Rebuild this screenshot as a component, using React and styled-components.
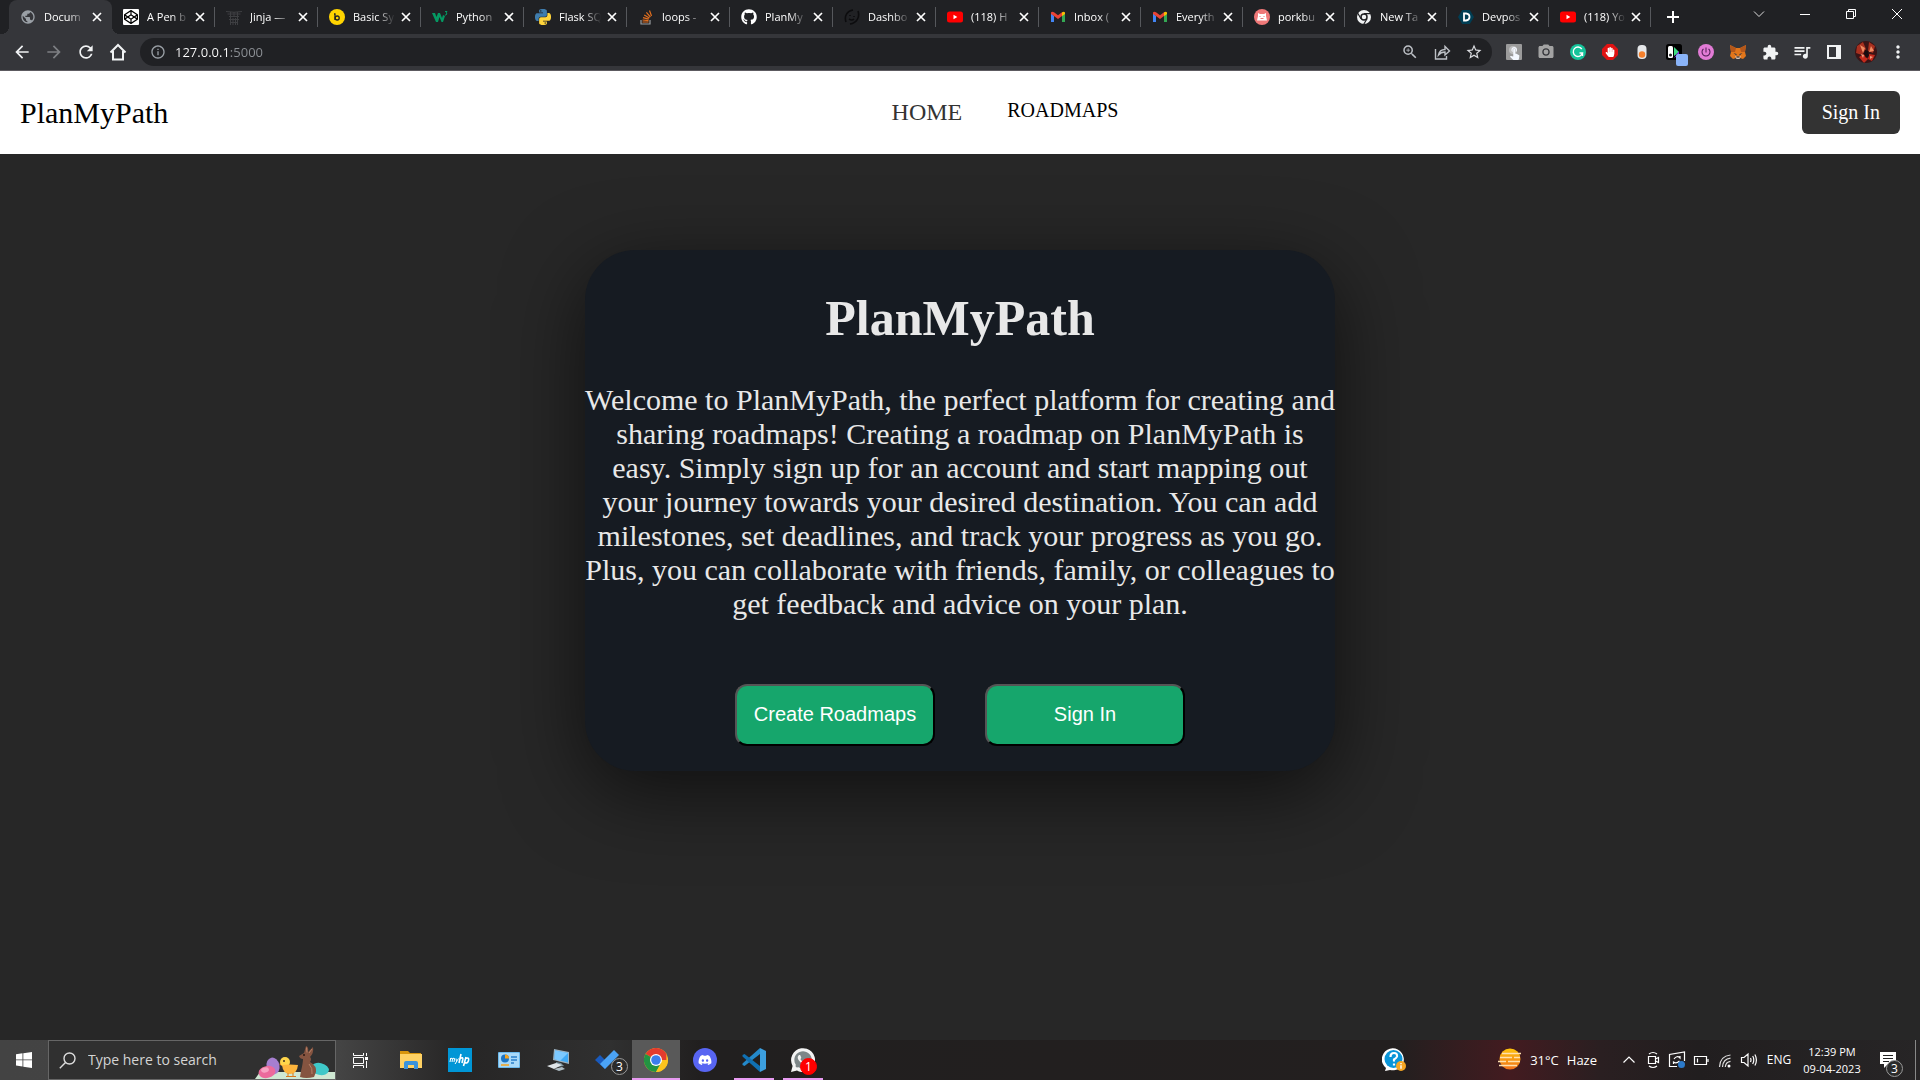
import React from "react";
import styled, { createGlobalStyle, css } from "styled-components";
import {
  MdArrowBack,
  MdArrowForward,
  MdExtension,
  MdInfoOutline,
  MdMoreVert,
  MdPhotoCamera,
  MdPowerSettingsNew,
  MdPublic,
  MdQueueMusic,
  MdRefresh,
  MdStarBorder,
  MdTouchApp,
  MdZoomIn,
} from "react-icons/md";
import { FaCodepen, FaDiscord, FaGithub, FaHandPaper, FaWhatsapp } from "react-icons/fa";

const GlobalStyle = createGlobalStyle`
  * {
    box-sizing: border-box;
  }

  body {
    margin: 0;
    background: #272727;
  }

  svg {
    display: block;
    flex: none;
  }

  button,
  input {
    margin: 0;
    padding: 0;
    border: 0;
    background: none;
    color: inherit;
    font: inherit;
  }
`;

const Screen = styled.div`
  display: flex;
  flex-direction: column;
  min-height: 100vh;
  background: #272727;
`;

/* browser */

const TabStrip = styled.header`
  display: flex;
  height: 34px;
  padding-left: 9px;
  background: #202124;
  color: #fff;
  font: 11px/16px "Open Sans", sans-serif;
`;

const Tabs = styled.div`
  display: grid;
  grid-template-columns: repeat(10, minmax(0, 103px)) repeat(6, minmax(0, 102px));
`;

const TabBox = styled.div`
  position: relative;
  display: flex;
  align-items: center;
  min-width: 0;
  padding: 0 7px 0 11px;

  &::after {
    content: "";
    position: absolute;
    right: 0;
    top: 7px;
    width: 1px;
    height: 20px;
    background: #56585c;
  }

  ${(props) =>
    props.$active &&
    css`
      background: #35363a;
      border-radius: 8px 8px 0 0;

      &::before,
      &::after {
        content: "";
        position: absolute;
        top: auto;
        bottom: 0;
        width: 8px;
        height: 8px;
        background: radial-gradient(circle at 0 0, transparent 8px, #35363a 8px);
      }
      &::before {
        left: -8px;
      }
      &::after {
        right: -8px;
        background: radial-gradient(circle at 100% 0, transparent 8px, #35363a 8px);
      }
    `}
`;

const TabTitle = styled.span`
  flex: 1;
  min-width: 0;
  margin-left: 8px;
  white-space: nowrap;
  mask-image: linear-gradient(to right, #000 24px, transparent 42px);
`;

const IconButton = styled.button`
  display: flex;
  align-items: center;
  justify-content: center;
  flex: none;
  width: ${(props) => props.$width || 32}px;
  height: ${(props) => props.$height || 36}px;
  color: ${(props) => props.$color || "#f1f3f4"};
`;

const WindowButtons = styled.div`
  display: flex;
  margin-left: auto;
`;

const Toolbar = styled.div`
  display: flex;
  align-items: center;
  height: 37px;
  padding: 0 6px;
  border-bottom: 1px solid #5c5a60;
  background: #35363a;
`;

const Omnibox = styled.div`
  display: flex;
  align-items: center;
  flex: 1;
  height: 28px;
  margin: 0 6px;
  padding: 0 2px 0 10px;
  border-radius: 14px;
  background: #202124;
  color: #9aa0a6;
`;

const UrlInput = styled.input`
  flex: 1;
  min-width: 0;
  margin-left: 9px;
  background: linear-gradient(to right, #fff 54px, #8d9196 54px);
  background-clip: text;
  color: transparent;
  font: 13px/20px "Open Sans", sans-serif;
`;

/* site */

const NavBar = styled.nav`
  display: flex;
  align-items: center;
  justify-content: space-between;
  padding: 20px;
  background: #fff;
  font-family: "Liberation Serif", serif;
`;

const Brand = styled.a`
  color: #000;
  font-size: 30px;
  line-height: 34px;
  text-decoration: none;
`;

const NavLinks = styled.ul`
  display: flex;
  align-items: flex-start;
  gap: 45px;
  margin: 0;
  padding: 0 0 0 40px;
  list-style: none;
`;

const NavLink = styled.a`
  display: block;
  color: ${(props) => (props.$current ? "#333" : "#000")};
  font-size: ${(props) => (props.$current ? 24 : 20)}px;
  line-height: ${(props) => (props.$current ? 27 : 23)}px;
  text-decoration: none;
`;

const NavButton = styled.button`
  padding: 10px 20px;
  border-radius: 6px;
  background: #333;
  color: #fff;
  font-size: 20px;
  line-height: 23px;
`;

const Main = styled.main`
  flex: 1;
  padding: 96px 20px;
  font-family: "Liberation Serif", serif;
`;

const Card = styled.section`
  max-width: 750px;
  margin: 0 auto;
  padding: 39px 0 25px;
  border-radius: 50px;
  background: #161b22;
  box-shadow: 0 20px 80px rgba(0, 0, 0, 0.6);
  color: #e8e8e8;
  text-align: center;
`;

const Title = styled.h1`
  margin: 0 0 36px;
  font-size: 50px;
  line-height: 58px;
`;

const Intro = styled.p`
  margin: 0 0 63px;
  font-size: 30px;
  line-height: 34px;
`;

const Actions = styled.div`
  display: flex;
  justify-content: center;
  gap: 50px;
`;

const ActionButton = styled.button`
  width: 200px;
  height: 62px;
  padding-bottom: 2px;
  border: 2px solid;
  border-color: #555 #000 #000 #555;
  border-radius: 12px;
  background: #16a66c;
  color: #fff;
  font: 20px/24px "Liberation Sans", sans-serif;
`;

/* taskbar */

const TaskBar = styled.footer`
  display: flex;
  align-items: center;
  height: 40px;
  background: linear-gradient(
    to right,
    #434343 0,
    #444 340px,
    #262525 460px,
    #303030 610px,
    #211f1f 700px,
    #231f1f 1400px,
    #431b20 1510px,
    #2a1f21 1600px,
    #211e1f 1700px,
    #272526 1920px
  );
  color: #fff;
  font-family: "Open Sans", sans-serif;
`;

const SearchBox = styled.label`
  display: flex;
  align-items: center;
  width: 288px;
  height: 40px;
  padding-left: 10px;
  border: 1px solid #666;
  background: #303030;
`;

const SearchInput = styled.input`
  flex: 1;
  min-width: 0;
  margin-left: 12px;
  font-size: 14px;
  line-height: 20px;

  &::placeholder {
    color: #d4d4d4;
    opacity: 1;
  }
`;

const Apps = styled.div`
  display: flex;
  gap: 1px;
  margin-left: 3px;
`;

const AppButton = styled.button`
  position: relative;
  display: flex;
  align-items: center;
  justify-content: center;
  width: 48px;
  height: 40px;
  background: ${(props) => (props.$active ? "#595959" : "none")};

  &::after {
    content: "";
    position: absolute;
    bottom: 0;
    left: ${(props) => (props.$active ? 0 : 4)}px;
    right: ${(props) => (props.$active ? 0 : 4)}px;
    height: 2px;
    background: ${(props) => (props.$open ? "#e89bf2" : "none")};
  }
`;

const Badge = styled.span`
  position: absolute;
  right: ${(props) => props.$right}px;
  bottom: ${(props) => props.$bottom}px;
  width: 17px;
  height: 17px;
  border: 1px solid ${(props) => (props.$alert ? "#f00" : "#999")};
  border-radius: 50%;
  background: ${(props) => (props.$alert ? "#f00" : "#2b2b2b")};
  color: #fff;
  font-size: 12px;
  line-height: 15px;
  text-align: center;
`;

const Tray = styled.div`
  display: flex;
  align-items: center;
  height: 40px;
  margin-left: auto;
  font-size: 13px;
  line-height: 18px;
`;

const Weather = styled.button`
  display: flex;
  align-items: center;
  gap: 8px;
  margin: 0 20px 0 88px;
`;

const Language = styled.button`
  width: 36px;
  font-size: 12px;
`;

const Clock = styled.time`
  width: 70px;
  font-size: 11px;
  line-height: 17px;
  text-align: center;
`;

const Notifications = styled.button`
  position: relative;
  display: flex;
  align-items: center;
  justify-content: center;
  width: 48px;
  height: 40px;
  padding-right: 6px;
`;

const ShowDesktop = styled.button`
  width: 5px;
  height: 40px;
  border-left: 1px solid #888;
`;

/* drawings */

const PYTHON_HALF =
  "M14.25.18l.9.2.73.26.59.3.45.32.34.34.25.34.16.33.1.3.04.26.02.2-.01.13V8.5l-.05.63-.13.55-.21.46-.26.38-.3.31-.33.25-.35.19-.35.14-.33.1-.3.07-.26.04-.21.02H8.77l-.69.05-.59.14-.5.22-.41.27-.33.32-.27.35-.2.36-.15.37-.1.35-.07.32-.04.27-.02.21v3.06H3.17l-.21-.03-.28-.07-.32-.12-.35-.18-.36-.26-.36-.36-.35-.46-.32-.59-.28-.73-.21-.88-.14-1.05-.05-1.23.06-1.22.16-1.04.24-.87.32-.71.36-.57.4-.44.42-.33.42-.24.4-.16.36-.1.32-.05.24-.01h.16l.06.01h8.16v-.83H6.18l-.01-2.75-.02-.37.05-.34.11-.31.17-.28.25-.26.31-.23.38-.2.44-.18.51-.15.58-.12.64-.1.71-.06.77-.04.84-.02 1.27.05zm-6.3 1.98l-.23.33-.08.41.08.41.23.34.33.22.41.09.41-.09.33-.22.23-.34.08-.41-.08-.41-.23-.33-.33-.22-.41-.09-.41.09z";

const Svg = ({ size = 16, h = size, vb, children, ...rest }) => (
  <svg width={size} height={h} viewBox={vb || `0 0 ${size} ${h}`} fill="none" {...rest}>
    {children}
  </svg>
);

const CloseIcon = () => (
  <Svg size={16} stroke="#fff" strokeWidth="1.7">
    <path d="M4 4l8 8M12 4l-8 8" />
  </Svg>
);

const CodepenIcon = () => (
  <Svg>
    <rect width="16" height="16" rx="1" fill="#fff" />
    <FaCodepen x="1" y="1" size={14} color="#000" />
  </Svg>
);

const JinjaIcon = () => (
  <Svg stroke="#3e3f42">
    <path d="M0 2.500q8 1.500 16 0M1.500 5h13M3 7.500h10M4.500 3v13M11.500 3v13M8 3v4M7 9v7M9.500 9v7M3 10.500h10M4.500 13.500h7" />
  </Svg>
);

const BasicIcon = () => (
  <Svg>
    <circle cx="8" cy="8" r="8" fill="#ffd400" />
    <path d="M6 4.500v6.500M5 5h1.500" stroke="#222" strokeWidth="1.300" />
    <circle cx="8.200" cy="9" r="2" stroke="#222" strokeWidth="1.300" />
  </Svg>
);

const W3Icon = () => (
  <Svg>
    <path d="M0 4h3l1.500 4L6 4h2l2 5 1-3 2 1-2 6h-1.500L7.500 8 6 13H4z" fill="#059862" />
    <path d="M13 2.500h2l-1 1.500q2 .5 0 2h-1" stroke="#059862" />
  </Svg>
);

const PythonIcon = () => (
  <Svg vb="0 0 24 24">
    <path d={PYTHON_HALF} fill="#3f7cac" />
    <path d={PYTHON_HALF} fill="#ffd43b" transform="rotate(180 12 12)" />
  </Svg>
);

const StackIcon = () => (
  <Svg>
    <path d="M3 11v4h9v-4" stroke="#9a9da0" strokeWidth="1.200" />
    <path
      d="M4.500 13h6M4.500 11l6 .6M5 8.600l5.800 1.600M6.200 6l5.200 3M8.400 3.400l4 4.600M11.500 1.500l2 5.500"
      stroke="#e36f1e"
      strokeWidth="1.200"
    />
  </Svg>
);

const DashIcon = () => (
  <Svg stroke="#0c0c0e" strokeWidth="1.600">
    <path d="M2 13C0 7 3 2 9 1M14 2c2 6-1 12-8 13" />
    <path d="M6 6v1M10 7v1M5 10q3 2 5 0" />
  </Svg>
);

const YouTubeIcon = () => (
  <Svg>
    <rect y="2.500" width="16" height="11" rx="2.500" fill="#f00" />
    <path d="M6.500 5.800v4.400L10.300 8z" fill="#fff" />
  </Svg>
);

const GmailIcon = () => (
  <Svg>
    <path d="M1 4v9h3V7z" fill="#4285f4" />
    <path d="M15 4v9h-3V7z" fill="#34a853" />
    <path d="M1 3.500Q2 2 4 3.300l4 3 4-3V7L8 10 4 7 1 5z" fill="#ea4335" />
    <path d="M12 3.300q2-1.300 3 .2V5l-3 2.200z" fill="#fbbc04" />
  </Svg>
);

const PorkbunIcon = () => (
  <Svg>
    <circle cx="8" cy="8" r="8" fill="#ef7878" />
    <path d="M4 4l2 1h4l2-1v3l1 4.500H3L4 7z" fill="#fff" />
    <path d="M5.500 7.500h1M9.500 7.500h1M6.500 9.500h3" stroke="#ef7878" />
  </Svg>
);

const ChromeGreyIcon = () => (
  <Svg>
    <circle cx="8" cy="8" r="7" fill="#f1f3f4" />
    <circle cx="8" cy="8" r="3" fill="#f1f3f4" stroke="#202124" strokeWidth="1.500" />
    <path d="M8 4.600h7M5 9.800L1.600 4M11 9.800L7.600 15.500" stroke="#202124" strokeWidth="1.200" />
  </Svg>
);

const DevpostIcon = () => (
  <Svg>
    <path d="M4.200 1h7.600L16 8l-4.200 7H4.200L0 8z" fill="#003e54" />
    <path d="M6 4.500h2q3.500.3 3.500 3.500T8 11.500H6z" stroke="#fff" strokeWidth="1.800" />
  </Svg>
);

const ShareIcon = () => (
  <Svg size={18} stroke="#bdc1c6" strokeWidth="1.400">
    <path d="M2.500 6v10h11v-3" />
    <path d="M5.500 12q1-5.500 6.500-5.500V3.500L16.500 8 12 12V9q-4 0-6.500 3z" />
  </Svg>
);

const HomeIcon = () => (
  <Svg size={18} stroke="#f1f3f4" strokeWidth="2">
    <path d="M1.500 9.500L9 2l7.500 7.500M4 8v8.500h10V8" />
  </Svg>
);

const TouchIcon = () => (
  <Svg>
    <rect width="16" height="16" rx="1" fill="#9b9b9b" />
    <circle cx="7" cy="6" r="4" fill="#bdbdbd" />
    <MdTouchApp x="1" y="1" size={15} color="#f4f8ff" />
  </Svg>
);

const GrammarlyIcon = () => (
  <Svg>
    <circle cx="8" cy="8" r="8" fill="#15c39a" />
    <path d="M11.800 5A4.700 4.700 0 1 0 12.500 9H9.500M12.500 9v3" stroke="#fff" strokeWidth="1.400" />
  </Svg>
);

const AdblockIcon = () => (
  <Svg>
    <path d="M5 0h6l5 5v6l-5 5H5l-5-5V5z" fill="#e01212" />
    <FaHandPaper x="3" y="3" size={10} color="#fff" />
  </Svg>
);

const PillIcon = () => (
  <Svg>
    <rect x="3.500" y="1" width="9" height="14" rx="4" fill="#e6e8ea" />
    <circle cx="8" cy="10.500" r="3.200" fill="#f5802c" />
  </Svg>
);

const PlayerIcon = () => (
  <Svg size={28}>
    <rect x="6" y="6" width="16" height="16" rx="2.500" fill="#000" />
    <rect x="8" y="8" width="5" height="12" rx="1.500" fill="#fff" />
    <circle cx="10.500" cy="17" r="1.500" fill="#222" />
    <path d="M14 9l5 5-5 4z" fill="#3ddc84" />
    <path d="M14 20l5-7v4z" fill="#8a2be2" />
    <rect x="16" y="16" width="12" height="12" rx="2" fill="#8ab4f8" />
  </Svg>
);

const PowerIcon = () => (
  <Svg>
    <circle cx="8" cy="8" r="8" fill="#e27bd6" />
    <MdPowerSettingsNew x="2" y="2" size={12} color="#4b1c52" />
  </Svg>
);

const FoxIcon = () => (
  <Svg>
    <path d="M0 1l6 3h4l6-3-1 7 1 4-3 3-3-1H6l-3 1-3-3 1-4z" fill="#e2761b" />
    <path d="M0 1l6 3-1 4H1zM16 1l-6 3 1 4h4z" fill="#b5571a" />
    <path d="M3.500 9l3 1v1.500zM12.500 9l-3 1v1.500z" fill="#233447" />
    <path d="M5 12l2 .5h2l2-.5-1.500 3h-3z" fill="#d7c1b3" />
    <path d="M6.500 12.500h3v1h-3z" fill="#161616" />
  </Svg>
);

const PanelIcon = () => (
  <Svg>
    <rect x="1" y="1" width="14" height="14" fill="#f1f3f4" />
    <rect x="3" y="3" width="7" height="10" fill="#35363a" />
  </Svg>
);

const AvatarIcon = () => (
  <Svg size={22}>
    <clipPath id="avatar">
      <circle cx="11" cy="11" r="11" />
    </clipPath>
    <g clipPath="url(#avatar)">
      <path d="M0 0h22v22H0z" fill="#3a1416" />
      <path d="M2 5l6-4 3 7-4 6-6-2zM14 1l6 4-2 7-5-2z" fill="#a8301f" />
      <path d="M5 4l5 3-2 5zM16 5l3 5-5 1z" fill="#ef8b62" />
      <path d="M4 16l5-3 4 5-4 4zM14 13l6 1-3 6-4-2z" fill="#c32a1c" />
      <path d="M10 9l3 1 1 5-3 2-2-4z" fill="#180b0e" />
      <path d="M6 13l3 1-1 3zM15 15l3 1-3 2z" fill="#f2a080" />
    </g>
  </Svg>
);

const EasterArt = () => (
  <Svg size={80} h={38}>
    <path d="M0 38l5-7h75v7z" fill="#cfe8d3" />
    <ellipse cx="18" cy="25" rx="6.500" ry="8.500" fill="#a67fd0" transform="rotate(-12 18 25)" />
    <ellipse cx="12" cy="31" rx="8.500" ry="6" fill="#ec6a9c" transform="rotate(-12 12 31)" />
    <ellipse cx="10" cy="29" rx="4" ry="2.500" fill="#f7a3c3" transform="rotate(-12 10 29)" />
    <ellipse cx="65" cy="28" rx="9" ry="6" fill="#3fc8c8" transform="rotate(12 65 28)" />
    <path d="M26 22l-2 1 2 1.500z" fill="#e8731a" />
    <circle cx="30" cy="21" r="5" fill="#ffd54a" />
    <path d="M27 24q8-1 16 0-1 9-8 9t-8-9z" fill="#fdb43c" />
    <path d="M33 32v3M38 32v3M31 35.500h10" stroke="#d9781a" />
    <circle cx="29" cy="20" r="1" fill="#432" />
    <g transform="translate(0 5)">
      <path
        d="M44 10l5-3 2-7q3 1 2 6l5-5q1 6-3 10 2 2 0 5 7 4 6 10l-2 5q-8 2-14 0l1-6q2-8 2-12-3 0-4-3z"
        fill="#855440"
      />
      <path d="M51.500 1.500l.5 5M57 3l-3 4M54 18q4 4 3 10" stroke="#b98268" />
      <circle cx="49" cy="9" r="1" fill="#2a1712" />
    </g>
  </Svg>
);

const ExplorerIcon = () => (
  <Svg size={24}>
    <path d="M1 3h8l2 2h11v5H1z" fill="#d9960c" />
    <path d="M1 6h22v14H1z" fill="#ffd264" />
    <path d="M5 21v-6q0-2 2-2h10q2 0 2 2v6h-4v-4H9v4z" fill="#3a93dc" />
  </Svg>
);

const MyHpIcon = () => (
  <Svg size={24} stroke="#fff">
    <rect width="24" height="24" fill="#0096d6" stroke="none" />
    <path d="M2 14l.7-4M2.500 11q2-2 2 0L4 14M4.500 11q2-2 2 0L6 14M8 10.500l.5 3L10.500 10.500M9 13l-2 3" />
    <path d="M13 6l-2 9M12.300 10.500q3-2 2.500 1l-.8 3.500M18 9l-2.500 9M17.500 10.500q4-1.500 3 2t-3.800 2" strokeWidth="1.600" />
  </Svg>
);

const ControlPanelIcon = () => (
  <Svg size={22} h={16}>
    <rect width="22" height="16" rx="1" fill="#6bb9ec" />
    <rect x="1" y="1" width="20" height="14" fill="#a9d9f8" />
    <circle cx="7" cy="6.500" r="4" fill="#1b75c4" />
    <path d="M7 6.500V2.500a4 4 0 0 1 4 4z" fill="#f6a21c" />
    <path d="M13 5h6M13 8h6M13 11h3" stroke="#2a7fc9" strokeWidth="1.500" />
    <path d="M3 13h8" stroke="#f6a21c" strokeWidth="1.500" />
  </Svg>
);

const ComputerIcon = () => (
  <Svg size={24}>
    <path d="M8 1l15 3v12L7 12z" fill="#9db2c0" />
    <path d="M9 2.500L22 5v9.500L8.500 11z" fill="#3fa9f5" />
    <path d="M9 2.500L22 5l-8 8-5.500-2z" fill="#7cc9ff" />
    <path d="M10 14l5 1 3 3-8 1z" fill="#78909c" />
    <path d="M1 18l9-3 6 2-8 4z" fill="#dfe5e9" />
    <path d="M8 21l8-2 3 2-6 2z" fill="#b0bec5" />
  </Svg>
);

const TodoIcon = () => (
  <Svg size={24}>
    <path d="M0 12l5-5 7 7-2 7z" fill="#195abd" />
    <path d="M5 16L19 2l5 5-14 14z" fill="#4ba3f5" />
  </Svg>
);

const ChromeIcon = () => (
  <Svg size={24}>
    <circle cx="12" cy="12" r="12" fill="#fcc31e" />
    <path d="M12 12L1.600 6A12 12 0 0 1 22.400 6z" fill="#e33b2e" />
    <path d="M12 12H22.400V6H12z" fill="#e33b2e" />
    <path d="M1.600 6A12 12 0 0 0 12 24l5.200-9-5.200-3z" fill="#229342" />
    <path d="M17 12h7a12 12 0 0 1-12 12l5-9z" fill="#fcc31e" />
    <circle cx="12" cy="12" r="6" fill="#fff" />
    <circle cx="12" cy="12" r="4.800" fill="#3b7ded" />
  </Svg>
);

const DiscordIcon = () => (
  <Svg size={24}>
    <circle cx="12" cy="12" r="12" fill="#5865f2" />
    <FaDiscord x="5" y="5" size={14} color="#fff" />
  </Svg>
);

const CodeIcon = () => (
  <Svg size={24}>
    <path d="M18 0L.500 15.500v1.500L2.500 18 18 6z" fill="#2489ca" />
    <path d="M18 24L.500 8.500V7L2.500 6 18 18z" fill="#1070b3" />
    <path d="M18 0l6 3v18l-6 3z" fill="#3c9fe0" />
  </Svg>
);

const WhatsappIcon = () => (
  <Svg size={24}>
    <path d="M0 24l1.600-6A12 12 0 1 1 6 22.500z" fill="#f4f4f4" />
    <circle cx="12" cy="12" r="10" fill="#7d8688" />
    <FaWhatsapp x="0" y="0" size={24} color="#f4f4f4" />
  </Svg>
);

const StartIcon = () => (
  <Svg>
    <path d="M0 2.300L6.500 1.300v6.200H0zM7.300 1.200L16 0v7.500H7.300zM0 8.300h6.500v6.200L0 13.600zM7.300 8.300H16V16l-8.700-1.300z" fill="#fff" />
  </Svg>
);

const SearchIcon = () => (
  <Svg size={17} stroke="#ddd" strokeWidth="1.400">
    <circle cx="10.500" cy="6.500" r="5.500" />
    <path d="M6.500 10.500L.800 16.200" />
  </Svg>
);

const TaskViewIcon = () => (
  <Svg size={17} stroke="#fff" strokeWidth="1">
    <path d="M1.500 1v2.500h10V1M1.500 16v-2.500h10V16M1.500 5.500h10v6h-10zM14.500 1v3M14.500 9v7" />
    <path d="M13 5h3v3h-3z" fill="#fff" stroke="none" />
  </Svg>
);

const HelpIcon = () => (
  <Svg size={24}>
    <path d="M3 23l1-3A11 11 0 1 1 8 22z" fill="#fff" />
    <circle cx="11.500" cy="11" r="9" fill="#0a95d8" />
    <path d="M8.500 9q0-4 3.500-4t3 3.500q-.5 1.500-3 3v2M12 15.500v2" stroke="#fff" strokeWidth="2.200" />
    <circle cx="19" cy="18" r="5" fill="#f5a623" />
    <path d="M19 15v1.300M19 17.300v3.500" stroke="#fff" strokeWidth="1.400" />
  </Svg>
);

const HazeIcon = () => (
  <Svg size={24}>
    <linearGradient id="sun" x2="0" y2="1">
      <stop stopColor="#ffc40c" />
      <stop offset="1" stopColor="#f0701a" />
    </linearGradient>
    <circle cx="12" cy="11" r="10.500" fill="url(#sun)" />
    <path d="M4 5.500h19M2 9.500h12M16 9.500h6M0 13.500h8M10 13.500h12M1 17.500h18" stroke="#ffe0ae" strokeWidth="1.600" />
  </Svg>
);

const CaretIcon = () => (
  <Svg size={14} stroke="#fff" strokeWidth="1.200">
    <path d="M1.500 9.500L7 4l5.500 5.500" />
  </Svg>
);

const MeetIcon = () => (
  <Svg size={18} stroke="#fff" strokeWidth="1.200">
    <path d="M5 3q4-3 8 0M5 15q4 3 8 0M4.500 5.500h7v7h-7zM11.500 8l3-1.500v5l-3-1.500" />
  </Svg>
);

const SyncIcon = () => (
  <Svg size={18} stroke="#fff" strokeWidth="1.200">
    <path d="M9 15.500H1.500v-12L16.500 1v9" />
    <path d="M6 8q3-4 6-1V5M11.500 10q-3 3-6 1v2" />
    <circle cx="13.500" cy="13.500" r="3.500" fill="#2b79c9" stroke="none" />
  </Svg>
);

const BatteryIcon = () => (
  <Svg size={18} stroke="#fff" strokeWidth="1.200">
    <path d="M2.500 5.500h12v8h-12zM16 8v3M5.500 7.500v4" />
  </Svg>
);

const WifiIcon = () => (
  <Svg size={18} stroke="#ddd" strokeWidth="1.200">
    <path d="M3.500 16Q4 5 14.500 4M6.500 16Q7 8 14.500 7.200M9.300 16q.5-5 5.200-5.600" />
    <circle cx="13" cy="15" r="1.500" fill="#fff" stroke="none" />
  </Svg>
);

const VolumeIcon = () => (
  <Svg size={18} stroke="#fff" strokeWidth="1.200">
    <path d="M1.500 6.500h2.500l4-3.500v12l-4-3.500H1.500zM10.500 7q1 2 0 4M12.700 5q2.200 4 0 8M14.900 3.500q3 5.500 0 11" />
  </Svg>
);

const NoteIcon = () => (
  <Svg size={18}>
    <path d="M1 1h16v12H9l-4 4v-4H1z" fill="#fff" />
    <path d="M4 4.500h10M4 7.500h10M4 10.500h6" stroke="#222" />
  </Svg>
);

const tabs = [
  { title: "Docum", icon: <MdPublic size={16} color="#9aa0a6" /> },
  { title: "A Pen b", icon: <CodepenIcon /> },
  { title: "Jinja —", icon: <JinjaIcon /> },
  { title: "Basic Sy", icon: <BasicIcon /> },
  { title: "Python", icon: <W3Icon /> },
  { title: "Flask SQ", icon: <PythonIcon /> },
  { title: "loops -", icon: <StackIcon /> },
  { title: "PlanMy", icon: <FaGithub size={16} /> },
  { title: "Dashbo", icon: <DashIcon /> },
  { title: "(118) H", icon: <YouTubeIcon /> },
  { title: "Inbox (", icon: <GmailIcon /> },
  { title: "Everyth", icon: <GmailIcon /> },
  { title: "porkbu", icon: <PorkbunIcon /> },
  { title: "New Ta", icon: <ChromeGreyIcon /> },
  { title: "Devpos", icon: <DevpostIcon /> },
  { title: "(118) Yo", icon: <YouTubeIcon /> },
];

const extensions = [
  { name: "Touch", icon: <TouchIcon /> },
  { name: "Screenshot", icon: <MdPhotoCamera size={18} color="#a3a3a3" /> },
  { name: "Grammar", icon: <GrammarlyIcon /> },
  { name: "Ad blocker", icon: <AdblockIcon /> },
  { name: "Recorder", icon: <PillIcon /> },
  { name: "Player", icon: <PlayerIcon /> },
  { name: "Power", icon: <PowerIcon /> },
  { name: "Wallet", icon: <FoxIcon /> },
  { name: "Extensions", icon: <MdExtension size={17} /> },
  { name: "Media", icon: <MdQueueMusic size={20} /> },
  { name: "Side panel", icon: <PanelIcon /> },
  { name: "Profile", icon: <AvatarIcon /> },
  { name: "Menu", icon: <MdMoreVert size={20} /> },
];

const apps = [
  { name: "File Explorer", icon: <ExplorerIcon /> },
  { name: "myHP", icon: <MyHpIcon /> },
  { name: "Control Panel", icon: <ControlPanelIcon /> },
  { name: "This PC", icon: <ComputerIcon /> },
  { name: "To Do", icon: <TodoIcon />, badge: 3 },
  { name: "Chrome", icon: <ChromeIcon />, active: true, open: true },
  { name: "Discord", icon: <DiscordIcon /> },
  { name: "VS Code", icon: <CodeIcon />, open: true },
  { name: "WhatsApp", icon: <WhatsappIcon />, open: true, badge: 1, alert: true },
];

const trayIcons = [
  { name: "Hidden icons", icon: <CaretIcon /> },
  { name: "Meet now", icon: <MeetIcon /> },
  { name: "Display", icon: <SyncIcon /> },
  { name: "Battery", icon: <BatteryIcon /> },
  { name: "Network", icon: <WifiIcon /> },
  { name: "Volume", icon: <VolumeIcon /> },
];

function BrowserChrome() {
  return (
    <>
      <TabStrip>
        <Tabs>
          {tabs.map((tab, i) => (
            <TabBox key={i} $active={i === 0}>
              {tab.icon}
              <TabTitle>{tab.title}</TabTitle>
              <IconButton $width={16} $height={16} aria-label="Close tab">
                <CloseIcon />
              </IconButton>
            </TabBox>
          ))}
        </Tabs>
        <IconButton $width={44} $height={34} aria-label="New tab">
          <Svg size={14} stroke="#fff" strokeWidth="2">
            <path d="M7 1v12M1 7h12" />
          </Svg>
        </IconButton>
        <WindowButtons>
          <IconButton $width={46} $height={28} aria-label="Search tabs">
            <Svg size={12} stroke="#ddd">
              <path d="M1 3.500l5 5 5-5" />
            </Svg>
          </IconButton>
          <IconButton $width={46} $height={28} aria-label="Minimize">
            <Svg size={10} stroke="#fff">
              <path d="M0 5.500h10" />
            </Svg>
          </IconButton>
          <IconButton $width={46} $height={28} aria-label="Restore">
            <Svg size={10} stroke="#fff">
              <path d="M.5 2.500h7v7h-7zM2.500 2.500v-2h7v7h-2" />
            </Svg>
          </IconButton>
          <IconButton $width={46} $height={28} aria-label="Close">
            <Svg size={10} stroke="#fff">
              <path d="M0 0l10 10M10 0L0 10" />
            </Svg>
          </IconButton>
        </WindowButtons>
      </TabStrip>
      <Toolbar>
        <IconButton aria-label="Back">
          <MdArrowBack size={20} />
        </IconButton>
        <IconButton aria-label="Forward" $color="#7d7f83">
          <MdArrowForward size={20} />
        </IconButton>
        <IconButton aria-label="Reload">
          <MdRefresh size={20} />
        </IconButton>
        <IconButton aria-label="Home">
          <HomeIcon />
        </IconButton>
        <Omnibox>
          <MdInfoOutline size={16} />
          <UrlInput aria-label="Address" defaultValue="127.0.0.1:5000" />
          <IconButton aria-label="Zoom" $height={28} $color="#bdc1c6">
            <MdZoomIn size={18} />
          </IconButton>
          <IconButton aria-label="Share" $height={28}>
            <ShareIcon />
          </IconButton>
          <IconButton aria-label="Bookmark" $height={28} $color="#dadce0">
            <MdStarBorder size={18} />
          </IconButton>
        </Omnibox>
        {extensions.map((item) => (
          <IconButton key={item.name} aria-label={item.name}>
            {item.icon}
          </IconButton>
        ))}
      </Toolbar>
    </>
  );
}

function WindowsTaskBar() {
  return (
    <TaskBar>
      <IconButton $width={48} $height={40} aria-label="Start">
        <StartIcon />
      </IconButton>
      <SearchBox>
        <SearchIcon />
        <SearchInput aria-label="Search" placeholder="Type here to search" />
        <EasterArt />
      </SearchBox>
      <IconButton $width={48} $height={40} aria-label="Task view">
        <TaskViewIcon />
      </IconButton>
      <Apps>
        {apps.map((app) => (
          <AppButton key={app.name} aria-label={app.name} $active={app.active} $open={app.open}>
            {app.icon}
            {app.badge && (
              <Badge $right={app.alert ? 10 : 3} $bottom={5} $alert={app.alert}>
                {app.badge}
              </Badge>
            )}
          </AppButton>
        ))}
      </Apps>
      <Tray>
        <IconButton $width={32} $height={40} aria-label="Help">
          <HelpIcon />
        </IconButton>
        <Weather>
          <HazeIcon />
          <span>31°C</span>
          <span>Haze</span>
        </Weather>
        {trayIcons.map((item) => (
          <IconButton key={item.name} $width={24} $height={40} aria-label={item.name}>
            {item.icon}
          </IconButton>
        ))}
        <Language>ENG</Language>
        <Clock>
          12:39 PM
          <br />
          09-04-2023
        </Clock>
        <Notifications aria-label="Notifications">
          <NoteIcon />
          <Badge $right={12} $bottom={3}>
            3
          </Badge>
        </Notifications>
        <ShowDesktop aria-label="Show desktop" />
      </Tray>
    </TaskBar>
  );
}

export default function App() {
  return (
    <Screen>
      <GlobalStyle />
      <BrowserChrome />
      <NavBar>
        <Brand href="#">PlanMyPath</Brand>
        <NavLinks>
          <li>
            <NavLink href="#" $current>
              HOME
            </NavLink>
          </li>
          <li>
            <NavLink href="#">ROADMAPS</NavLink>
          </li>
        </NavLinks>
        <NavButton>Sign In</NavButton>
      </NavBar>
      <Main>
        <Card>
          <Title>PlanMyPath</Title>
          <Intro>
            Welcome to PlanMyPath, the perfect platform for creating and sharing roadmaps! Creating
            a roadmap on PlanMyPath is easy. Simply sign up for an account and start mapping out
            your journey towards your desired destination. You can add milestones, set deadlines,
            and track your progress as you go. Plus, you can collaborate with friends, family, or
            colleagues to get feedback and advice on your plan.
          </Intro>
          <Actions>
            <ActionButton>Create Roadmaps</ActionButton>
            <ActionButton>Sign In</ActionButton>
          </Actions>
        </Card>
      </Main>
      <WindowsTaskBar />
    </Screen>
  );
}
